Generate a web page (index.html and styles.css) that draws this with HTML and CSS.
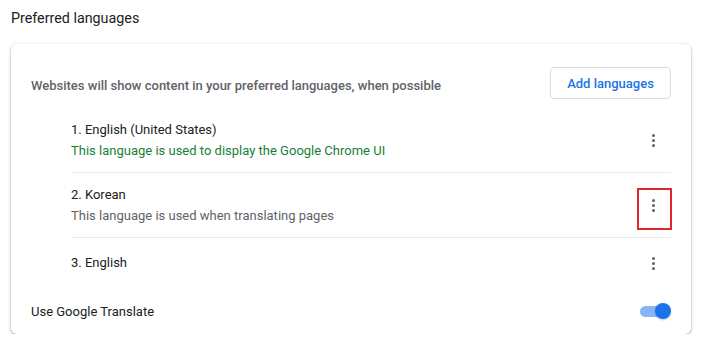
FILE: index.html
```html
<!DOCTYPE html>
<html>
<head>
<meta charset="utf-8">
<link rel="stylesheet" href="styles.css">
</head>
<body>
<div class="page">
  <h2 class="title">Preferred languages</h2>
  <div class="card">
    <div class="header">
      <span class="header-text">Websites will show content in your preferred languages, when possible</span>
      <button class="add-btn">Add languages</button>
    </div>
    <div class="list">
      <div class="row two">
        <div class="row-text">
          <div class="name">1. English (United States)</div>
          <div class="sub green">This language is used to display the Google Chrome UI</div>
        </div>
        <div class="kebab"><span></span><span></span><span></span></div>
      </div>
      <div class="row two">
        <div class="row-text">
          <div class="name">2. Korean</div>
          <div class="sub">This language is used when translating pages</div>
        </div>
        <div class="kebab marked"><span></span><span></span><span></span></div>
      </div>
      <div class="row one">
        <div class="row-text">
          <div class="name">3. English</div>
        </div>
        <div class="kebab"><span></span><span></span><span></span></div>
      </div>
    </div>
    <div class="toggle-row">
      <span class="name">Use Google Translate</span>
      <div class="toggle"><div class="track"></div><div class="knob"></div></div>
    </div>
  </div>
</div>
</body>
</html>
```
FILE: styles.css
```css
* { box-sizing: border-box; }
html, body { margin: 0; background: #fff; }
body { font-family: Roboto, "Noto Sans", sans-serif; font-size: 13px; color: #202124; }
.page { padding: 0 13px 0 11px; }
.title {
  margin: 0;
  font-size: 14.3px;
  font-weight: 400;
  line-height: 20px;
  padding-top: 8px;
  height: 44px;
  color: #202124;
}
.card {
  background: #fff;
  border-radius: 6px;
  box-shadow: 0 1px 2px rgba(60,64,67,0.3), 0 1px 3px 1px rgba(60,64,67,0.15);
  padding: 0 20px 0 20px;
}
.header {
  display: flex;
  align-items: center;
  justify-content: space-between;
  height: 64px;
  padding-top: 14px;
}
.header-text { color: #5f6368; font-weight: 500; line-height: 20px; margin-top: 6px; }
.add-btn {
  font-family: inherit;
  font-size: 13px;
  font-weight: 500;
  color: #1a73e8;
  background: #fff;
  border: 1px solid #dadce0;
  border-radius: 4px;
  width: 121px;
  height: 32px;
  padding: 0;
}
.list { padding-left: 40px; }
.row {
  display: flex;
  align-items: center;
  justify-content: space-between;
  line-height: 20px;
}
.row.two { height: 65px; border-bottom: 1px solid #e8eaed; padding-top: 1px; }
.row.one { height: 50px; }
.sub { color: #5f6368; margin-top: 1px; }
.sub.green { color: #188038; }
.kebab {
  width: 36px;
  height: 36px;
  display: flex;
  flex-direction: column;
  align-items: center;
  justify-content: center;
  gap: 2px;
  position: relative;
}
.kebab span { width: 3px; height: 3px; border-radius: 50%; background: #5f6368; }
.kebab.marked::after {
  content: "";
  position: absolute;
  left: 2px;
  top: 0;
  width: 31px;
  height: 38px;
  border: 2px solid #e0262e;
}
.toggle-row {
  display: flex;
  align-items: center;
  justify-content: space-between;
  height: 46px;
}
.toggle { position: relative; width: 32px; height: 16px; }
.track {
  position: absolute;
  left: 1px;
  top: 3px;
  width: 27px;
  height: 11px;
  border-radius: 6px;
  background: #8ab4f8;
}
.knob {
  position: absolute;
  right: 0;
  top: 0;
  width: 16px;
  height: 16px;
  border-radius: 50%;
  background: #1a73e8;
  box-shadow: 0 1px 2px rgba(0,0,0,0.2);
}
```
